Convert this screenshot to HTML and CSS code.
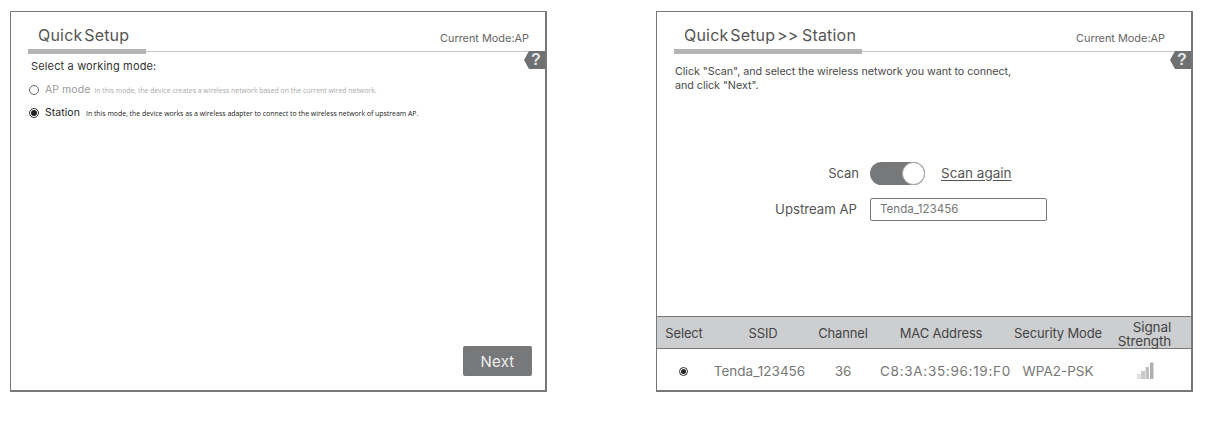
FILE: index.html
```html
<!DOCTYPE html>
<html lang="en">
<head>
<meta charset="utf-8">
<title>Quick Setup</title>
<link rel="stylesheet" href="styles.css">
</head>
<body>
<main class="page">
  <section class="panel panel-mode">
    <header class="head">
      <h1 class="title title-short">Quick Setup</h1>
      <span class="mode">Current Mode:AP</span>
    </header>
    <div class="help">?</div>
    <p class="prompt">Select a working mode:</p>
    <div class="option option-off">
      <span class="radio"></span><span class="opt-name">AP mode</span>
      <span class="opt-desc">In this mode, the device creates a wireless network based on the current wired network.</span>
    </div>
    <div class="option option-on">
      <span class="radio radio-on"></span><span class="opt-name">Station</span>
      <span class="opt-desc">In this mode, the device works as a wireless adapter to connect to the wireless network of upstream AP.</span>
    </div>
    <div class="actions"><button class="next">Next</button></div>
  </section>

  <section class="panel panel-station">
    <header class="head">
      <h1 class="title title-long">Quick Setup &gt;&gt;&nbsp; Station</h1>
      <span class="mode">Current Mode:AP</span>
    </header>
    <div class="help">?</div>
    <p class="intro">Click "Scan", and select the wireless network you want to connect,<br>and click "Next".</p>
    <div class="form">
      <div class="form-row">
        <span class="label label-scan">Scan</span>
        <span class="toggle"><span class="knob"></span></span>
        <span class="scan-again">Scan again</span>
      </div>
      <div class="form-row">
        <span class="label">Upstream AP</span>
        <span class="input">Tenda_123456</span>
      </div>
    </div>
    <div class="table">
      <div class="row row-head">
        <span>Select</span><span>SSID</span><span>Channel</span><span>MAC Address</span><span>Security Mode</span><span class="two-line">Signal<br>Strength</span>
      </div>
      <div class="row row-body">
        <span class="cell-radio"><span class="radio radio-on radio-small"></span></span>
        <span class="cell-ssid">Tenda_123456</span><span>36</span><span class="cell-mac">C8:3A:35:96:19:F0</span><span>WPA2-PSK</span>
        <span class="cell-signal">
          <svg width="18" height="18" viewBox="0 0 18 18" aria-hidden="true">
            <rect x="1" y="12" width="3.5" height="5" fill="#dcdcdc"/>
            <rect x="5" y="9" width="4" height="8" fill="#c9c9c9"/>
            <rect x="9.5" y="5" width="3.5" height="12" fill="#c0c0c0"/>
            <rect x="14" y="0.5" width="3.5" height="16.5" fill="#b0b0b0"/>
          </svg>
        </span>
      </div>
    </div>
  </section>
</main>
</body>
</html>
```

FILE: styles.css
```css
* { box-sizing: border-box; }
html, body { margin: 0; padding: 0; background: #fff; }
body { width: 1208px; height: 421px; overflow: hidden; font-family: Inter, "Liberation Sans", sans-serif; color: #555; }
.page { display: flex; gap: 109px; padding: 11px 0 0 10px; }
.panel { position: relative; width: 537px; height: 381px; border: 2px solid #77787a; border-width: 1.5px 2px 2px 1.5px; display: flex; flex-direction: column; }

.head { display: flex; justify-content: space-between; align-items: flex-end; height: 40px; margin-left: 17px; border-bottom: 1px solid #c4c5c6; }
.title { margin: 0 0 -3px; height: 36px; padding: 8px 0 0 10px; border-bottom: 5px solid #b4b5b7; font-size: 16px; line-height: 18px; font-weight: 400; color: #555; letter-spacing: .2px; word-spacing: -3px; white-space: nowrap; }
.title-short { width: 118px; }
.title-long { width: 188px; }
.mode { font-size: 10.9px; line-height: 14px; margin: 0 16px 6px 0; color: #666; }
.panel-station .mode { margin-right: 26px; }

.help { position: absolute; right: 0; top: 39px; width: 21px; height: 18px; background: #6f7072; color: #e6e6e6; font: 700 16px/18px "Liberation Sans", sans-serif; text-align: center; padding-left: 3px; clip-path: polygon(5px 0, 100% 0, 100% 100%, 5px 100%, 0 50%); }

.prompt { margin: 0; padding: 7px 0 0 20px; font-size: 11px; line-height: 14px; color: #333; letter-spacing: .15px; }
.option { display: flex; align-items: center; height: 14px; margin-left: 18px; }
.option-off { margin-top: 10px; color: #9a9a9a; }
.option-on { margin-top: 9px; color: #222; }
.opt-name { font-size: 10.5px; margin-left: 6px; letter-spacing: .05px; line-height: 14px; }
.opt-desc { font-family: "Open Sans", sans-serif; font-size: 6.9px; margin-left: 6px; padding-top: 1px; }
.option-off .opt-desc { color: #a8a8a8; margin-left: 4px; }

.radio { display: block; flex: none; width: 10px; height: 10px; border-radius: 50%; border: 1px solid #666; background: #fff; position: relative; }
.radio-on { border-color: #333; }
.radio-on::after { content: ""; position: absolute; left: 1px; top: 1px; width: 6px; height: 6px; border-radius: 50%; background: #222; }
.radio-small { width: 9px; height: 9px; }
.radio-small::after { width: 5px; height: 5px; }

.actions { margin-top: auto; display: flex; justify-content: flex-end; padding: 0 13px 14px 0; }
.next { width: 69px; height: 30px; border: 0; border-radius: 2px; background: #77787a; color: #eee; font-family: Inter, sans-serif; font-size: 15px; letter-spacing: .2px; padding: 0; }

.intro { margin: 0; padding: 13px 0 0 18px; font-size: 10.75px; line-height: 13.5px; color: #4a4a4a; letter-spacing: -.05px; }
.form { margin-top: 70px; display: flex; flex-direction: column; gap: 13px; }
.form-row { display: flex; align-items: center; height: 23px; }
.label { width: 200px; text-align: right; font-size: 13.2px; color: #555; padding-bottom: 2px; }
.label-scan { width: 202px; font-size: 13px; }
.toggle { position: relative; width: 55px; height: 23px; margin-left: 11px; border-radius: 12px; background: #77787a; }
.knob { position: absolute; right: 0; top: 0; width: 23px; height: 23px; border-radius: 50%; background: #fff; border: 1px solid #aaa; }
.scan-again { margin-left: 16px; padding-bottom: 2px; font-size: 13.5px; color: #555; text-decoration: underline; text-underline-offset: 2px; }
.input { width: 177px; height: 23px; margin-left: 13px; border: 1px solid #77787a; border-radius: 2px; padding-left: 9px; font-size: 11.6px; line-height: 21px; color: #777; }

.table { margin-top: auto; }
.row { display: grid; grid-template-columns: 54px 104px 56px 140px 94px 78px; text-align: center; align-items: center; }
.row-head { height: 33px; border-top: 1.5px solid #77787a; border-bottom: 1.5px solid #77787a; background: #cdced0; font-size: 13px; color: #444; }
.row-head span { white-space: nowrap; letter-spacing: -.15px; }
.two-line { line-height: 14px; font-size: 13.5px; text-align: right; padding: 2px 12px 0 0; }
.row-body { height: 41px; font-size: 13.5px; color: #777; padding-top: 3px; }
.row-body span { white-space: nowrap; }
.cell-ssid { margin-left: -7px; }
.cell-mac { letter-spacing: .7px; margin-left: 9px; }
.cell-radio { display: flex; justify-content: center; align-items: center; padding-right: 2px; }
.cell-signal { display: flex; justify-content: center; align-items: center; padding-left: 1px; }
```
